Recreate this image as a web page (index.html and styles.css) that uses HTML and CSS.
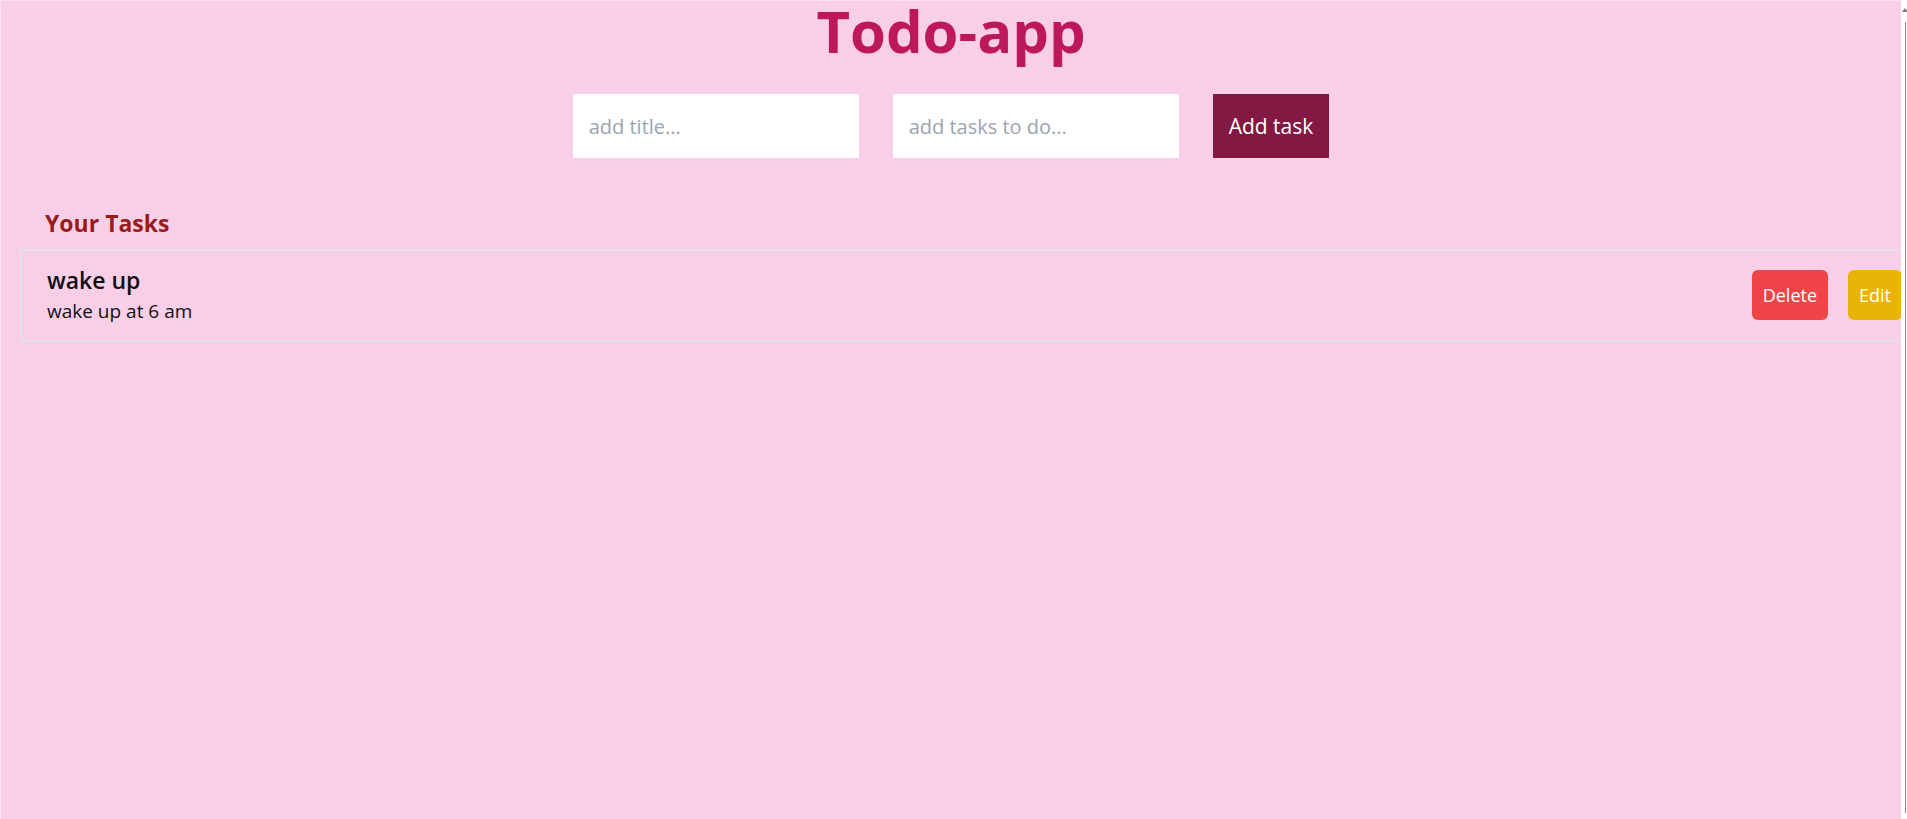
FILE: index.html
```html
<!DOCTYPE html>
<html lang="en">
<head>
<meta charset="utf-8">
<title>Todo-app</title>
<link rel="stylesheet" href="styles.css">
</head>
<body>
<div class="page">
  <main class="app">
    <h1 class="title">Todo-app</h1>
    <form class="add-row">
      <input class="field" type="text" placeholder="add title...">
      <input class="field" type="text" placeholder="add tasks to do...">
      <button class="add-btn" type="button">Add task</button>
    </form>
    <section class="tasks">
      <h2 class="tasks-heading">Your Tasks</h2>
      <div class="task">
        <div class="task-text">
          <div class="task-title">wake up</div>
          <div class="task-desc">wake up at 6 am</div>
        </div>
        <div class="task-actions">
          <button class="btn btn-delete" type="button">Delete</button>
          <button class="btn btn-edit" type="button">Edit</button>
        </div>
      </div>
    </section>
  </main>
  <div class="scrollbar">
    <div class="scroll-arrow"></div>
    <div class="scroll-thumb"></div>
  </div>
</div>
</body>
</html>
```

FILE: styles.css
```css
* { box-sizing: border-box; }

html, body {
  margin: 0;
  padding: 0;
  height: 100%;
}

body {
  font-family: "Open Sans", "Noto Sans", sans-serif;
  background: #ffffff;
}

.page {
  display: flex;
  height: 100vh;
  overflow: hidden;
}

.app {
  flex: 1;
  min-width: 0;
  background: #f9cfe7;
  border-top: 1px solid #fde2ef;
  border-left: 1px solid #fde2ef;
  overflow: hidden;
}

.title {
  margin: 0;
  text-align: center;
  font-size: 58px;
  line-height: 60px;
  font-weight: 700;
  color: #be185d;
}

.add-row {
  display: flex;
  justify-content: center;
  gap: 34px;
  margin: 33px 0 0;
}

.field {
  width: 286px;
  height: 64px;
  padding: 0 16px;
  border: none;
  outline: none;
  background: #ffffff;
  font-family: inherit;
  font-size: 20px;
  color: #111;
}

.field::placeholder {
  color: #9ca3af;
}

.add-btn {
  height: 64px;
  padding: 0 16px;
  border: none;
  background: #831843;
  color: #ffffff;
  font-family: inherit;
  font-size: 21px;
}

.tasks {
  padding-left: 19px;
  margin-top: 49px;
}

.tasks-heading {
  margin: 0;
  padding-left: 25px;
  font-size: 23px;
  line-height: 32px;
  font-weight: 700;
  color: #991b1b;
}

.task {
  width: 1906px;
  margin-top: 10px;
  display: flex;
  justify-content: space-between;
  align-items: center;
  border: 2px solid #e9dfe8;
  padding: 14px 22px 16px 25px;
}

.task-title {
  font-size: 23px;
  line-height: 30px;
  font-weight: 600;
  color: #111111;
}

.task-desc {
  margin-top: 3px;
  font-size: 19px;
  line-height: 26px;
  color: #111111;
}

.task-actions {
  display: flex;
  gap: 20px;
}

.btn {
  height: 50px;
  padding: 0 11px;
  border: none;
  border-radius: 6px;
  color: #ffffff;
  font-family: inherit;
  font-size: 18px;
}

.btn-delete { background: #ef4548; }
.btn-edit { background: #eab308; }

.scrollbar {
  width: 6px;
  flex-shrink: 0;
  background: #ffffff;
  display: flex;
  flex-direction: column;
  align-items: flex-end;
  padding: 8px 1px 6px 0;
}

.scroll-arrow {
  width: 0;
  height: 0;
  border-left: 3px solid transparent;
  border-right: 3px solid transparent;
  border-bottom: 4px solid #7a7a7a;
  margin-right: -2px;
}

.scroll-thumb {
  flex: 1;
  width: 1px;
  margin-top: 10px;
  background: #8a8a8a;
}
```
